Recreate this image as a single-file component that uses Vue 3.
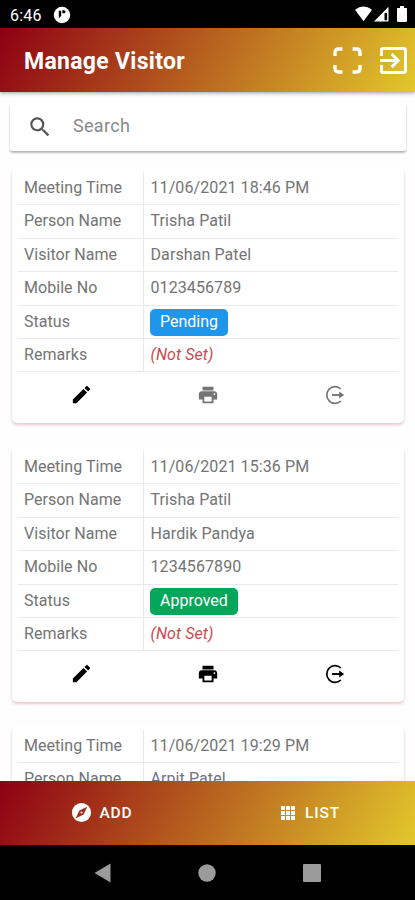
<template>
  <div class="phone">
    <div class="status-bar">
      <span class="clock">6:46</span>
      <svg class="app-dot" viewBox="0 0 18 18">
        <circle cx="9" cy="9" r="8.2" fill="#fff" />
        <path d="M5.8 4.8h2.400v5l-2.400 2.600z" fill="#000" />
        <path d="M9.400 4.300h1.600a1.500 1.500 0 0 1 0 3H9.400z" fill="#000" />
      </svg>
      <div class="status-icons">
        <svg width="17" height="16" viewBox="0 0 17 16"><path d="M0 3.800Q8.500-2.600 17 3.800L8.500 15.300z" fill="#fff" /></svg>
        <svg width="15" height="16" viewBox="0 0 15 16">
          <path d="M14.500 .8v14.700H0z" fill="#fff" />
          <path d="M10.500 7h2.600v7.300h-2.600z" fill="#000" />
        </svg>
        <svg width="10" height="16" viewBox="0 0 10 16"><path d="M3 0h4v2h2.200q.8 0 .8.8v12q0 1.200-1.200 1.200H1.200Q0 16 0 14.800v-12Q0 2 .8 2H3z" fill="#fff" /></svg>
      </div>
    </div>

    <header class="header">
      <h1>Manage Visitor</h1>
      <button class="icon-btn scan-btn">
        <svg width="29" height="27" viewBox="0 0 29 27" fill="none" stroke="#fff" stroke-width="3.400">
          <path d="M2 9V5.500Q2 2 5.500 2H9.500M19.500 2h4Q27 2 27 5.500V9M27 18v3.500q0 3.500-3.500 3.500h-4M9.500 25h-4Q2 25 2 21.500V18" />
        </svg>
      </button>
      <button class="icon-btn">
        <svg width="27" height="27" viewBox="3 3 18 18" fill="#fff">
          <path d="M10.090 15.590L11.500 17l5-5-5-5-1.410 1.410L12.670 11H3v2h9.670l-2.580 2.590zM19 3H5a2 2 0 0 0-2 2v4h2V5h14v14H5v-4H3v4a2 2 0 0 0 2 2h14c1.100 0 2-.9 2-2V5c0-1.100-.9-2-2-2z" />
        </svg>
      </button>
    </header>

    <main class="content">
      <div class="search">
        <svg width="26" height="26" viewBox="0 0 24 24" fill="#555">
          <path d="M15.500 14h-.79l-.28-.27A6.471 6.471 0 0 0 16 9.500 6.500 6.500 0 1 0 9.500 16c1.610 0 3.090-.59 4.230-1.570l.27.28v.79l5 4.990L20.490 19l-4.990-5zm-6 0C7.010 14 5 11.990 5 9.500S7.010 5 9.500 5 14 7.010 14 9.500 11.990 14 9.500 14z" />
        </svg>
        <input v-model="query" type="text" placeholder="Search" />
      </div>

      <div v-for="visit in filteredVisits" :key="visit.time" class="card">
        <div class="table">
          <div v-for="field in fields" :key="field.key" class="row">
            <div class="label">{{ field.label }}</div>
            <div class="value">
              <span v-if="field.key === 'status'" class="badge" :class="visit.status.toLowerCase()">{{ visit.status }}</span>
              <em v-else-if="field.key === 'remarks'" class="not-set">(Not Set)</em>
              <span v-else :class="field.key">{{ visit[field.key] }}</span>
            </div>
          </div>
        </div>
        <div class="actions">
          <button class="action">
            <svg width="23" height="23" viewBox="0 0 24 24" fill="#000">
              <path d="M3 17.250V21h3.750L17.810 9.940l-3.750-3.750L3 17.250zM20.710 7.040a1 1 0 0 0 0-1.410l-2.340-2.340a1 1 0 0 0-1.410 0l-1.830 1.830 3.750 3.750 1.830-1.830z" />
            </svg>
          </button>
          <button class="action" :class="{ muted: visit.status !== 'Approved' }">
            <svg width="22" height="22" viewBox="0 0 24 24" fill="currentColor">
              <path d="M19 8H5c-1.660 0-3 1.340-3 3v6h4v4h12v-4h4v-6c0-1.660-1.340-3-3-3zm-3 11H8v-5h8v5zm3-7a1 1 0 1 1 0-2 1 1 0 0 1 0 2zM18 3H6v4h12V3z" />
            </svg>
          </button>
          <button class="action" :class="{ muted: visit.status !== 'Approved' }">
            <svg width="20" height="20" viewBox="0 0 20 20" fill="none" stroke="currentColor">
              <path d="M15.800 4A8.300 8.300 0 1 0 15.800 16" stroke-width="1.700" />
              <path d="M7 10h9" stroke-width="1.900" />
              <path d="M14.200 6.400L19.200 10l-5 3.600z" fill="currentColor" stroke="none" />
            </svg>
          </button>
        </div>
      </div>
    </main>

    <nav class="tabs">
      <button class="tab">
        <svg width="23" height="23" viewBox="0 0 24 24" fill="#fff">
          <path d="M12 10.900a1.100 1.100 0 1 0 0 2.200 1.100 1.100 0 0 0 0-2.200zM12 2a10 10 0 1 0 0 20 10 10 0 0 0 0-20zm2.190 12.190L6 18l3.810-8.190L18 6l-3.810 8.190z" />
        </svg>
        <span>ADD</span>
      </button>
      <button class="tab list-tab">
        <svg class="grid-icon" width="14" height="14" viewBox="0 0 14 14" fill="#fff">
          <rect v-for="n in 9" :key="n" :x="((n - 1) % 3) * 5" :y="Math.floor((n - 1) / 3) * 5" width="4" height="4" />
        </svg>
        <span>LIST</span>
      </button>
    </nav>

    <div class="system-nav">
      <svg width="17" height="20" viewBox="0 0 17 20"><path d="M16.500 .5v19L.5 10z" fill="#9b9b9b" /></svg>
      <svg width="18" height="18" viewBox="0 0 18 18"><circle cx="9" cy="9" r="8.700" fill="#9b9b9b" /></svg>
      <svg width="18" height="18" viewBox="0 0 18 18"><rect width="18" height="18" rx="1" fill="#9b9b9b" /></svg>
    </div>
  </div>
</template>

<script setup>
import { ref, computed } from 'vue'

const query = ref('')

const fields = [
  { key: 'time', label: 'Meeting Time' },
  { key: 'person', label: 'Person Name' },
  { key: 'visitor', label: 'Visitor Name' },
  { key: 'mobile', label: 'Mobile No' },
  { key: 'status', label: 'Status' },
  { key: 'remarks', label: 'Remarks' }
]

const visits = ref([
  { time: '11/06/2021 18:46 PM', person: 'Trisha Patil', visitor: 'Darshan Patel', mobile: '0123456789', status: 'Pending' },
  { time: '11/06/2021 15:36 PM', person: 'Trisha Patil', visitor: 'Hardik Pandya', mobile: '1234567890', status: 'Approved' },
  { time: '11/06/2021 19:29 PM', person: 'Arpit Patel', visitor: '', mobile: '', status: 'Pending' }
])

const filteredVisits = computed(() => {
  const q = query.value.toLowerCase()
  return visits.value.filter((v) => (v.person + ' ' + v.visitor).toLowerCase().includes(q))
})
</script>

<style>
body {
  margin: 0;
  background: #fff;
}
</style>

<style scoped>
.phone {
  height: 900px;
  display: flex;
  flex-direction: column;
  overflow: hidden;
  background: #fefefe;
  font-family: Roboto, sans-serif;
}
.phone svg {
  display: block;
  flex: none;
}
button {
  border: none;
  background: none;
  padding: 0;
  font-family: inherit;
  color: inherit;
}
.status-bar {
  flex: none;
  height: 28px;
  box-sizing: border-box;
  padding: 1px 8px 0 10px;
  display: flex;
  align-items: center;
  background: #000;
  color: #fff;
}
.clock {
  width: 43px;
  padding-top: 1px;
  font-size: 16px;
  letter-spacing: 0.2px;
}
.app-dot {
  width: 18px;
  height: 18px;
}
.status-icons {
  margin-left: auto;
  margin-bottom: 2px;
  display: flex;
  gap: 2px;
}
.status-icons svg:last-child {
  margin-left: 6px;
}
.header {
  flex: none;
  height: 64px;
  box-sizing: border-box;
  padding: 0 8px 0 24px;
  display: flex;
  align-items: center;
  position: relative;
  background: linear-gradient(120deg, #8e0013 0%, #e2c82b 100%);
  box-shadow: 0 1px 4px rgba(0, 0, 0, 0.4);
  color: #fff;
}
.header h1 {
  flex: 1;
  margin: 0;
  padding-top: 2px;
  font-size: 23px;
  font-weight: 700;
  letter-spacing: 0.3px;
}
.scan-btn {
  margin-right: 18px;
}
.content {
  flex: 1;
  min-height: 0;
  overflow: hidden;
}
.search {
  height: 49px;
  margin: 10px 9px 0 10px;
  padding-left: 17px;
  display: flex;
  align-items: center;
  background: #fff;
  border-radius: 3px;
  box-shadow: 0 2px 2px rgba(0, 0, 0, 0.25), 0 1px 2px rgba(0, 0, 0, 0.06);
}
.search input {
  flex: 1;
  border: none;
  outline: none;
  padding: 0 0 2px 20px;
  background: none;
  font: 18px Roboto, sans-serif;
  letter-spacing: 0.3px;
  color: #666;
}
.search input::placeholder {
  color: #8a8a8a;
}
.card {
  height: 256px;
  box-sizing: border-box;
  margin: 16px 11px 23px 12px;
  padding: 5px 6px 0;
  background: #fff;
  border-radius: 5px;
  box-shadow: 0 2px 3px rgba(190, 50, 80, 0.28);
}
.card + .card {
  margin-top: 0;
}
.row {
  height: 33.4px;
  box-sizing: border-box;
  display: flex;
  border-bottom: 1px solid #e9e9e9;
  font-size: 16px;
  line-height: 32px;
  color: #747474;
}
.label {
  width: 126px;
  box-sizing: border-box;
  padding-left: 6px;
  border-right: 1px solid #e9e9e9;
  letter-spacing: 0.05px;
}
.value {
  padding-left: 6.5px;
  line-height: 32px;
  letter-spacing: 0.09px;
}
.badge {
  display: block;
  height: 27px;
  margin: 3px 0 0 -0.5px;
  padding: 0 10px;
  border-radius: 5px;
  line-height: 25px;
  letter-spacing: 0;
  color: #fff;
}
.badge.pending {
  background: #1e96ec;
}
.badge.approved {
  background: #04a65a;
}
.not-set {
  color: #cb4a50;
}
.actions {
  display: flex;
  height: 45px;
}
.action {
  flex: 1;
  display: flex;
  align-items: center;
  justify-content: center;
  color: #000;
}
.action.muted {
  color: #757575;
}
.tabs {
  flex: none;
  height: 64px;
  display: flex;
  position: relative;
  background: linear-gradient(120deg, #8e0013 0%, #e2c82b 100%);
  color: #fff;
}
.tab {
  flex: 1;
  display: flex;
  align-items: center;
  justify-content: center;
  gap: 6px;
  padding: 0 6px 1px 0;
  font-size: 15.5px;
  font-weight: 500;
  letter-spacing: 0.9px;
}
.list-tab {
  padding-right: 3px;
}
.grid-icon {
  margin-right: 4px;
}
.system-nav {
  flex: none;
  height: 55px;
  display: flex;
  align-items: center;
  justify-content: center;
  gap: 87px;
  background: #000;
}
</style>
